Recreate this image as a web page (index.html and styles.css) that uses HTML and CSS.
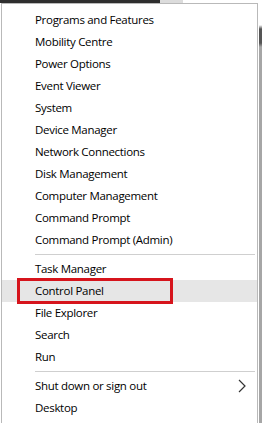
FILE: index.html
```html
<!DOCTYPE html>
<html lang="en">
<head>
    <meta charset="UTF-8">
    <title>Quick Link Menu</title>
    <link rel="stylesheet" href="styles.css">
</head>
<body>
    <div class="topbar">
        <div class="topbar-dark"></div>
        <div class="topbar-light"></div>
    </div>
    <div class="screen">
        <div class="menu">
            <div class="item">Programs and Features</div>
            <div class="item">Mobility Centre</div>
            <div class="item">Power Options</div>
            <div class="item">Event Viewer</div>
            <div class="item">System</div>
            <div class="item">Device Manager</div>
            <div class="item">Network Connections</div>
            <div class="item">Disk Management</div>
            <div class="item">Computer Management</div>
            <div class="item">Command Prompt</div>
            <div class="item">Command Prompt (Admin)</div>
            <div class="separator"></div>
            <div class="item">Task Manager</div>
            <div class="item active">
                <span class="marker"></span>
                Control Panel
            </div>
            <div class="item">File Explorer</div>
            <div class="item">Search</div>
            <div class="item">Run</div>
            <div class="separator"></div>
            <div class="item has-sub">
                Shut down or sign out
                <svg class="chevron" width="8" height="14" viewBox="0 0 8 14">
                    <path d="M1 1 L7 7 L1 13" fill="none" stroke="#333" stroke-width="1.2"/>
                </svg>
            </div>
            <div class="item">Desktop</div>
        </div>
        <div class="edge"></div>
    </div>
</body>
</html>
```

FILE: styles.css
```css
body {
    margin: 0;
    background: #fff;
    font-family: "Open Sans", "Noto Sans", sans-serif;
    font-size: 11.5px;
    color: #000;
    overflow: hidden;
}
.topbar {
    display: flex;
    height: 3px;
}
.topbar-dark {
    width: 160px;
    background: #2e2e2e;
}
.topbar-light {
    width: 23px;
    background: #dcdcdc;
}
.screen {
    display: flex;
    height: 420px;
}
.menu {
    width: 255px;
    margin-left: 1px;
    border: 1px solid #b9b9b9;
    border-bottom: none;
    padding-top: 5px;
    background: #fff;
}
.item {
    position: relative;
    display: flex;
    align-items: center;
    height: 22px;
    padding-left: 33px;
    padding-right: 12px;
    padding-bottom: 1px;
    box-sizing: border-box;
    letter-spacing: -0.3px;
}
.item.active {
    background: #e6e6e6;
}
.marker {
    position: absolute;
    left: 15px;
    top: -2px;
    width: 150px;
    height: 20px;
    border: 3px solid #d6141c;
}
.has-sub {
    justify-content: space-between;
}
.chevron {
    margin-right: -1px;
}
.separator {
    height: 1px;
    margin: 3px 2px 3px 33px;
    background: #cfcfcf;
}
.edge {
    width: 3px;
    margin-left: 1px;
    background: linear-gradient(#fff 0, #fff 22px, #555 26px, #555 40px, #a6a6a6 44px);
}
```
